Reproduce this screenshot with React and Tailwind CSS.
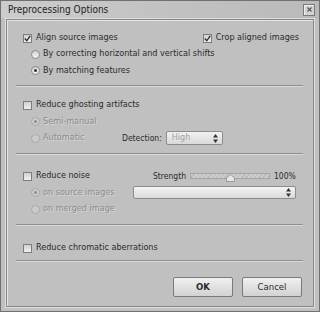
import React from 'react'

function Check({ checked }) {
  return (
    <span className="w-[9px] h-[9px] border border-[#7d7d7d] bg-gradient-to-b from-[#d0d0d0] to-[#f0f0f0] flex items-center justify-center shrink-0">
      {checked && (
        <svg width="7" height="7" viewBox="0 0 7 7">
          <path d="M0.8 3.5 L2.8 5.8 L6.2 0.8" stroke="#2a2a2a" strokeWidth="1.3" fill="none" />
        </svg>
      )}
    </span>
  )
}

function Radio({ on, disabled }) {
  return (
    <span className={`w-[9px] h-[9px] rounded-full border ${disabled ? 'border-[#a8a8a8] bg-[#cbcbcb]' : 'border-[#8a8a8a] bg-gradient-to-b from-[#d4d4d4] to-[#f4f4f4]'} flex items-center justify-center shrink-0`}>
      {on && <span className={`w-[3px] h-[3px] rounded-full ${disabled ? 'bg-[#8e8e8e]' : 'bg-[#333]'}`} />}
    </span>
  )
}

function Sep() {
  return <div className="h-[2px] border-t border-[#8f8f8f] border-b border-b-[#dadada] mr-[10px]" />
}

function Arrows() {
  return (
    <svg width="5" height="9" viewBox="0 0 5 9">
      <path d="M2.5 0 L5 3.5 L0 3.5 Z" fill="#333" />
      <path d="M2.5 9 L5 5.5 L0 5.5 Z" fill="#333" />
    </svg>
  )
}

const dim = 'text-[#8c8c8c] [text-shadow:1px_1px_0_#d8d8d8]'

export default function App() {
  return (
    <div className="w-[320px] h-[312px] bg-[#c0c0c0] border border-[#707070] flex flex-col text-[9px] text-[#2b2b2b] font-['DejaVu_Sans_Condensed','DejaVu_Sans',sans-serif]">
      <div className="h-[17px] flex items-center justify-between pl-[7px] pr-[4px] bg-gradient-to-r from-[#cccccc] via-[#c2c2c2] to-[#bababa]">
        <span className="text-[10px] text-[#222]">Preprocessing Options</span>
        <span className="w-[12px] h-[12px] border border-[#7a7a7a] bg-[#d2d2d2] shadow-[inset_1px_1px_0_#f0f0f0] flex items-center justify-center">
          <svg width="5" height="5" viewBox="0 0 5 5">
            <path d="M0.5 0.5 L4.5 4.5 M4.5 0.5 L0.5 4.5" stroke="#555" strokeWidth="1.1" />
          </svg>
        </span>
      </div>
      <div className="flex-1 ml-[5px] mr-[5px] mb-[4px] mt-[1px] border border-[#878787] shadow-[inset_1px_1px_0_#e4e4e4,0_0_0_1px_#dedede] pl-[9px] flex flex-col">
        <div className="mt-[10px] h-[16px] flex items-center justify-between pl-[7px] pr-[14px]">
          <span className="flex items-center gap-[4px]"><Check checked />Align source images</span>
          <span className="flex items-center gap-[4px]"><Check checked />Crop aligned images</span>
        </div>
        <div className="h-[16px] flex items-center gap-[3px] pl-[15px]"><Radio />By correcting horizontal and vertical shifts</div>
        <div className="h-[17px] flex items-center gap-[3px] pl-[15px] mb-[6px]"><Radio on />By matching features</div>
        <Sep />
        <div className="mt-[10px] h-[16px] flex items-center gap-[4px] pl-[7px]"><Check />Reduce ghosting artifacts</div>
        <div className="h-[17px] flex items-center gap-[3px] pl-[15px]"><Radio on disabled /><span className={dim}>Semi-manual</span></div>
        <div className="h-[16px] flex items-center pl-[15px] mb-[7px]">
          <span className="flex items-center gap-[3px] w-[91px]"><Radio disabled /><span className={dim}>Automatic</span></span>
          <span className="text-[8.5px] mr-[4px]">Detection:</span>
          <span className="w-[57px] h-[14px] border border-[#8c8c8c] rounded-[2px] bg-gradient-to-b from-[#f2f2f2] to-[#d9d9d9] flex items-center justify-between pl-[5px] pr-[4px] text-[#a0a0a0]">High<Arrows /></span>
        </div>
        <Sep />
        <div className="mt-[13px] h-[16px] flex items-center pl-[7px]">
          <span className="flex items-center gap-[4px] w-[130px]"><Check />Reduce noise</span>
          <span className="text-[8.5px] w-[37px]">Strength</span>
          <span className="relative w-[80px] h-[6px] border border-[#a5a5a5] bg-[repeating-linear-gradient(135deg,#cdcdcd_0,#cdcdcd_2px,#b9b9b9_2px,#b9b9b9_3px)]">
            <svg className="absolute left-[35px] top-[0px]" width="9" height="8" viewBox="0 0 9 8">
              <path d="M4.5 0.5 L8.5 4 L8.5 7.5 L0.5 7.5 L0.5 4 Z" fill="#e6e6e6" stroke="#9a9a9a" />
            </svg>
          </span>
          <span className="text-[8.5px] ml-[4px]">100%</span>
        </div>
        <div className="h-[17px] flex items-center pl-[15px]">
          <span className="flex items-center gap-[3px] w-[102px]"><Radio on disabled /><span className={dim}>on source images</span></span>
          <span className="w-[163px] h-[13px] border border-[#8c8c8c] rounded-[2px] bg-gradient-to-b from-[#f4f4f4] to-[#dadada] flex items-center justify-end px-[4px]"><Arrows /></span>
        </div>
        <div className="h-[16px] flex items-center gap-[3px] pl-[15px] mb-[7px]"><Radio disabled /><span className={dim}>on merged image</span></div>
        <Sep />
        <div className="mt-[14px] h-[16px] flex items-center gap-[4px] pl-[7px] mb-[4px]"><Check />Reduce chromatic aberrations</div>
        <Sep />
        <div className="mt-[15px] flex justify-end gap-[9px] pr-[11px]">
          <button className="w-[60px] h-[20px] border border-[#7a7a7a] rounded-[2px] bg-gradient-to-b from-[#f0f0f0] to-[#d2d2d2] font-bold text-[9.5px]">OK</button>
          <button className="w-[60px] h-[20px] border border-[#7a7a7a] rounded-[2px] bg-gradient-to-b from-[#f0f0f0] to-[#d2d2d2] text-[9.5px]">Cancel</button>
        </div>
      </div>
    </div>
  )
}
